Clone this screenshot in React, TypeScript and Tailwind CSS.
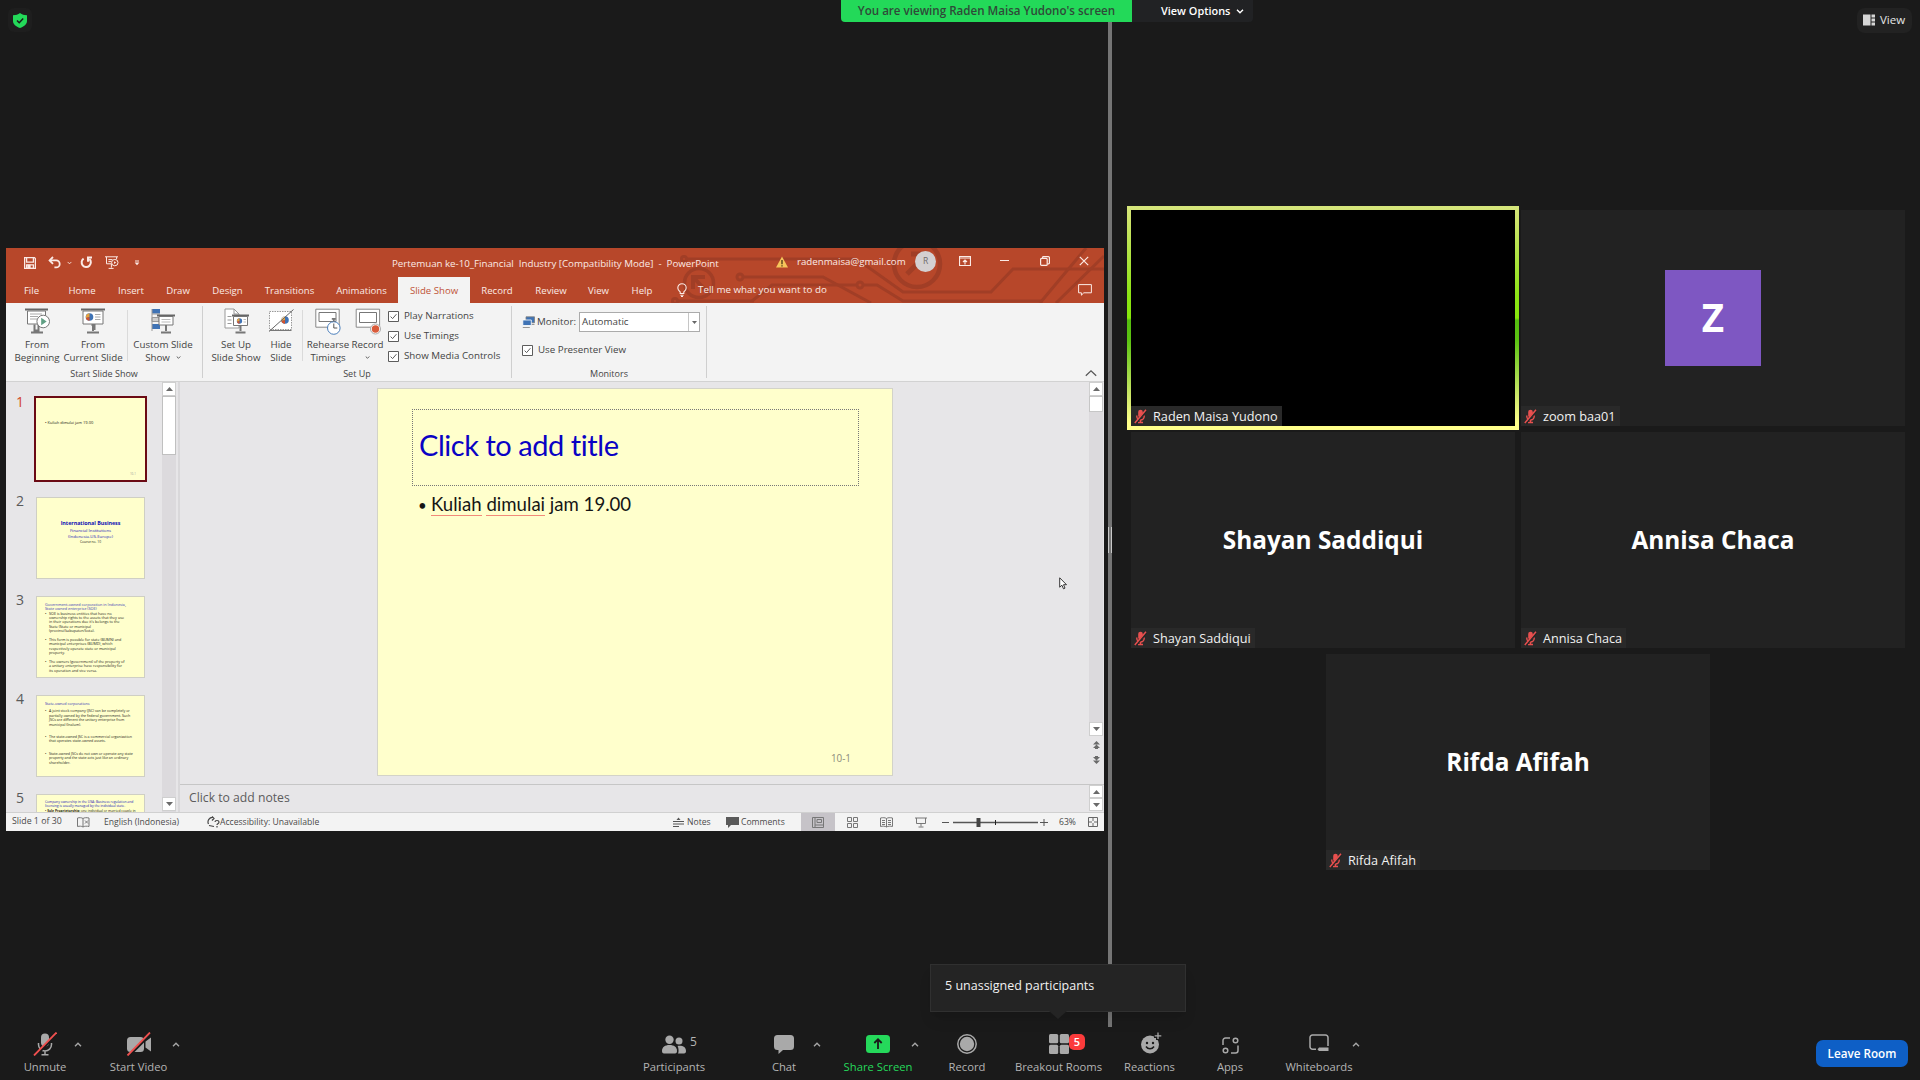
import React from 'react';
import { clsx } from 'clsx';

const Caret: React.FC<{ className?: string; up?: boolean }> = ({ className, up }) => (
  <svg viewBox="0 0 8 5" className={clsx('h-[5px] w-2 shrink-0', className)} fill="none" stroke="currentColor" strokeWidth="1.4">
    <path d={up ? 'M1 4.2 4 1.2 7 4.2' : 'M1 .8 4 3.8 7 .8'} />
  </svg>
);

const Triangle: React.FC<{ up?: boolean }> = ({ up }) => (
  <svg viewBox="0 0 7 4" className="h-1 w-[7px]" fill="#6a6a6a">
    <path d={up ? 'M0 4 3.5 0 7 4Z' : 'M0 0 3.5 4 7 0Z'} />
  </svg>
);

/* ---------- PowerPoint window ---------- */

const TitleBar: React.FC = () => (
  <div className="relative z-10 flex h-[29px] items-center text-[#fbeae5]">
    <svg viewBox="0 0 12 12" className="ml-[18px] size-3" fill="none" stroke="currentColor" strokeWidth="1.3">
      <path d="M.6.6h9.8l1 1v9.8H.6z M2.6.8v4.4h6.8V.8" />
      <path d="M2.6 11.4V7.8h6.8v3.6z" />
      <path d="M4 8.4h2v3H4z" fill="currentColor" />
    </svg>
    <svg viewBox="0 0 13 13" className="ml-3 size-[13px]" fill="none" stroke="currentColor" strokeWidth="1.8">
      <path d="M5 1 1.6 4.4 5 7.8" />
      <path d="M1.8 4.4h6.4a3.3 3.3 0 0 1 0 7H6.4" />
    </svg>
    <Caret className="ml-[6px] !h-[4px] !w-[5px]" />
    <svg viewBox="0 0 13 13" className="ml-[8px] size-[13px]" fill="none" stroke="currentColor" strokeWidth="2">
      <path d="M3.6 2.6A4.6 4.6 0 1 0 9.4 3" />
      <path d="M12 1.6H8v4.2" />
    </svg>
    <svg viewBox="0 0 14 13" className="ml-[12px] h-[13px] w-3.5" fill="none" stroke="currentColor" strokeWidth="1">
      <path d="M0 .8h13M1.5 1v6.8h5M11.6 1v2M3.4 3.6h4M3.4 5.6h3M6.4 8v3.6M3.6 12.4h5" />
      <circle cx="9.8" cy="6.6" r="3.2" />
      <path d="m9 5.2 2.2 1.4L9 8z" fill="currentColor" stroke="none" />
    </svg>
    <svg viewBox="0 0 6 6" className="ml-[15px] size-[6px]" fill="currentColor">
      <path d="M1 .4h4v1H1zM.6 2.6h4.8L3 5.2z" />
    </svg>
    <div className="ml-[252px] w-[389px] whitespace-pre pt-[3px] text-[9.75px] tracking-[-0.02px]">
      Pertemuan ke-10_Financial  Industry [Compatibility Mode]  -  PowerPoint
    </div>
    <svg viewBox="0 0 12 12" className="-ml-[5px] -mt-0.5 size-3">
      <path d="M6 .4 12 11.6H0z" fill="#f6c65b" />
      <path d="M6 4v4.2M6 9.2v1.4" stroke="#3a2a10" strokeWidth="1.2" />
    </svg>
    <div className="ml-[9px] w-[108px] text-[9.7px]">radenmaisa@gmail.com</div>
    <div className="-mt-[3px] ml-[10px] flex size-[21px] items-center justify-center rounded-full bg-[#d4d0d1] text-[8.5px] text-[#6d6b6b]">
      R
    </div>
    <svg viewBox="0 0 12 10" className="-mt-1 ml-[23px] h-2.5 w-3" fill="none" stroke="currentColor" strokeWidth="1.2">
      <path d="M.5.5h11v9H.5zM.5 2h11" />
      <path d="M6 8.4V4.4M4 6l2-2 2 2" />
    </svg>
    <div className="-mt-1 ml-[29px] h-px w-[9px] bg-current" />
    <svg viewBox="0 0 10 10" className="-mt-1 ml-[31px] size-2.5" fill="none" stroke="currentColor" strokeWidth="1.2">
      <rect x=".6" y="2.4" width="6.6" height="7" rx="1" />
      <path d="M2.6 2.2V1.4a.8.8 0 0 1 .8-.8h5a1 1 0 0 1 1 1V7a.8.8 0 0 1-.8.8h-1" />
    </svg>
    <svg viewBox="0 0 10 10" className="-mt-1 ml-[29px] size-2.5" fill="none" stroke="currentColor" strokeWidth="1.2">
      <path d="m.8.8 8.4 8.4M9.2.8.8 9.2" />
    </svg>
  </div>
);

const Circuit: React.FC = () => (
  <svg viewBox="0 0 434 55" className="absolute right-0 top-0 h-[55px] w-[434px]" fill="none" stroke="#a13e26" strokeWidth="3">
    <circle cx="29" cy="35" r="14.5" strokeWidth="3.5" />
    <path d="m37 44-13-14M23 41V29h12" strokeWidth="4" />
    <circle cx="247" cy="16" r="23" strokeWidth="4.5" />
    <path d="m237 26 18-18M241 6h15v15" strokeWidth="5" />
    <circle cx="14" cy="11" r="2.5" />
    <path d="M17 11h166l15 8 35 25h88l22-23h91" />
    <circle cx="70" cy="29" r="3" />
    <path d="M73 29h80l48 26" />
    <circle cx="190" cy="37" r="3" />
    <path d="M187 37h-85L82 53M193 37h14l26 16h140" />
    <circle cx="5" cy="53" r="2.5" />
    <path d="M8 53h76M370 55l46-55M386 55l48-47" />
  </svg>
);

const tabs = [
  { label: 'File', w: 'w-[51px]' },
  { label: 'Home', w: 'w-[50px]' },
  { label: 'Insert', w: 'w-[48px]' },
  { label: 'Draw', w: 'w-[46px]' },
  { label: 'Design', w: 'w-[53px]' },
  { label: 'Transitions', w: 'w-[71px]' },
  { label: 'Animations', w: 'w-[73px]' },
  { label: 'Slide Show', w: 'w-[72px]' },
  { label: 'Record', w: 'w-[54px]' },
  { label: 'Review', w: 'w-[54px]' },
  { label: 'View', w: 'w-[41px]' },
  { label: 'Help', w: 'w-[46px]' },
];

const MenuTabs: React.FC = () => (
  <div className="relative z-10 flex h-[26px] items-stretch text-[9.6px] text-[#fbeae5]">
    {tabs.map((tab) => (
      <div
        key={tab.label}
        className={clsx(
          'flex items-center justify-center pt-[2px]',
          tab.w,
          tab.label === 'Slide Show' && 'bg-[#f3f3f3] text-[#bf5338]',
        )}
      >
        {tab.label}
      </div>
    ))}
    <div className="ml-[12px] flex items-center gap-[11px]">
      <svg viewBox="0 0 10 14" className="h-3.5 w-2.5" fill="none" stroke="currentColor" strokeWidth="1.1">
        <path d="M3.2 10.5V9C2 8 .8 6.8.8 4.9a4.2 4.2 0 0 1 8.4 0C9.2 6.8 8 8 6.8 9v1.5zM3.4 12.2h3.2M4 13.5h2" />
      </svg>
      <span className="text-[9.8px]">Tell me what you want to do</span>
    </div>
    <svg viewBox="0 0 14 12" className="ml-auto mr-[12px] mt-[7px] h-3 w-3.5" fill="none" stroke="currentColor" strokeWidth="1">
      <path d="M.6.6h12.8v8.2H5.8L3.4 11.2V8.8H.6z" />
    </svg>
  </div>
);

const CheckBox: React.FC<{ label: string }> = ({ label }) => (
  <div className="flex h-5 items-center gap-[5px]">
    <svg viewBox="0 0 11 11" className="size-[11px]" fill="#fff" stroke="#5c5c5c" strokeWidth="1">
      <path d="M.5.5h10v10H.5z" />
      <path d="m2.6 5.6 2 2 3.8-4.4" fill="none" />
    </svg>
    <span>{label}</span>
  </div>
);

const RibbonButton: React.FC<{ className: string; lines: [string, string]; caret?: boolean; children: React.ReactNode }> = ({
  className,
  lines,
  caret,
  children,
}) => (
  <div className={clsx('flex shrink-0 flex-col items-center whitespace-nowrap leading-[13.5px]', className)}>
    <svg viewBox="0 0 26 27" className="h-[27px] w-[26px]" fill="none" stroke="#777" strokeWidth="1">
      {children}
    </svg>
    <span className="mt-[2.5px]">{lines[0]}</span>
    <span className="flex h-[13px] items-center gap-1.5">
      {lines[1]}
      {caret && <Caret className="!h-[3px] !w-[5px]" />}
    </span>
  </div>
);

const Pie: React.FC<{ cx: number; cy: number }> = ({ cx, cy }) => (
  <g stroke="none" transform={`translate(${cx} ${cy})`}>
    <circle r="3.8" fill="#3f73b5" />
    <path d="M0 0v-3.8A3.8 3.8 0 0 0-3.6 1z" fill="#e9a23b" />
    <path d="M0 0-3.6 1A3.8 3.8 0 0 0 0 3.8z" fill="#d4532d" />
  </g>
);

const Ribbon: React.FC = () => (
  <div className="flex h-[79px] border-b border-[#d2d2d2] bg-[#f3f3f3] text-[9.75px] text-[#444]">
    <div className="flex w-[196px] flex-col">
      <div className="flex h-[65px] pt-[5px]">
        <RibbonButton className="w-[62px]" lines={['From', 'Beginning']}>
          <path d="M1 1.5h23" stroke="#666" strokeWidth="2" />
          <path d="M3.5 3h18v13h-18z" fill="#fff" />
          <path d="M6 6h12M6 8.5h8M6 11h7" stroke="#aaa" />
          <path d="M10.5 16.5v6h4v-6M7 24.5h12" strokeWidth="2" />
          <circle cx="19.2" cy="13.5" r="6.3" fill="#fff" />
          <path d="m17.2 9.8 5.5 3.7-5.5 3.7z" fill="#5f9f83" stroke="none" />
        </RibbonButton>
        <RibbonButton className="w-[50px]" lines={['From', 'Current Slide']}>
          <path d="M1 1.5h24" stroke="#666" strokeWidth="2" />
          <path d="M3 3h20v13H3z" fill="#fff" />
          <Pie cx={9.5} cy={9} />
          <path d="M15 6.5h5.5M15 9h5.5M15 11.5h5.5" stroke="#aaa" />
          <path d="M13 16v7M11.5 17h3v5M7 24.5h12" strokeWidth="2" />
        </RibbonButton>
        <div className="ml-[9px] mt-[2px] h-[51px] w-px bg-[#dadada]" />
        <RibbonButton className="w-[70px]" lines={['Custom Slide', 'Show']} caret>
          <path d="M2 1h8v4.5H2zM2 16h8v5H2z" fill="#3f73b5" stroke="none" />
          <path d="M2 1v22M2 6h8M2 9.5h7v4H2z" stroke="#999" fill="#ccc" />
          <path d="M7 7.5h18" stroke="#666" strokeWidth="2" />
          <path d="M9 8.5h14v8.500H9z" fill="#fff" />
          <path d="M11.5 11.5h9M11.5 14h9" stroke="#bbb" />
          <path d="M16 17v6M11 24.5h10" strokeWidth="2" />
        </RibbonButton>
      </div>
      <div className="text-center text-[9px] leading-[15px]">Start Slide Show</div>
    </div>
    <div className="mt-[3px] h-[72px] w-px bg-[#cfcfcf]" />

    <div className="flex w-[308px] flex-col">
      <div className="flex h-[65px] pt-[5px]">
        <RibbonButton className="ml-[8px] w-[50px]" lines={['Set Up', 'Slide Show']}>
          <path d="M2 1h9l5 5v14H2z" fill="#fff" stroke="#999" />
          <path d="M11 1v5h5M4.5 8.5h4M4.5 12h4M4.5 15.5h4" stroke="#999" />
          <path d="M9 7.5h17" stroke="#666" strokeWidth="2" />
          <path d="M10.5 8.5h14v9h-14z" fill="#fff" />
          <g transform="translate(16.5 13) scale(.7)">
            <Pie cx={0} cy={0} />
          </g>
          <path d="M20.5 11.5h2.5M20.5 14h2.5" stroke="#bbb" />
          <path d="M17.5 18v5M12.5 24.5h10" strokeWidth="2" />
        </RibbonButton>
        <RibbonButton className="ml-[6px] w-[28px]" lines={['Hide', 'Slide']}>
          <path d="M1.5 3.5h22v18h-22z" fill="#fff" stroke="#999" strokeDasharray="1.5 1" />
          <Pie cx={17} cy={12} />
          <path d="M2 21V4h21z" fill="#fff" stroke="none" opacity=".5" />
          <path d="M1 23.5 25.5 1.5" stroke="#666" />
          <path d="M1.5 22.5h22" />
        </RibbonButton>
        <div className="ml-[7px] mt-[2px] h-[51px] w-px bg-[#dadada]" />
        <RibbonButton className="ml-[5px] w-[40px]" lines={['Rehearse', 'Timings']}>
          <path d="M.8 1.2h23.4v18H.8z" fill="#fff" stroke="#888" />
          <path d="M4 4.5h17v9H4z" />
          <circle cx="18.8" cy="20" r="6.3" fill="#fff" stroke="#4a7ebb" />
          <path d="M18.8 10.5v3M16.8 10.8h4" strokeWidth="1.8" />
          <path d="M18.8 15.5V20h3.5" stroke="#555" />
        </RibbonButton>
        <RibbonButton className="w-[39px]" lines={['Record', '']} caret>
          <path d="M1.2 1.2h23.4v18H1.2z" fill="#fff" stroke="#888" />
          <path d="M4.5 4.5h17v10h-17z" />
          <circle cx="20.5" cy="21" r="5" fill="#fff" stroke="#aaa" />
          <circle cx="20.5" cy="21" r="3.7" fill="#d95b3a" stroke="none" />
        </RibbonButton>
        <div className="-mt-[2px] ml-px whitespace-nowrap">
          <CheckBox label="Play Narrations" />
          <CheckBox label="Use Timings" />
          <CheckBox label="Show Media Controls" />
        </div>
      </div>
      <div className="text-center text-[9px] leading-[15px]">Set Up</div>
    </div>
    <div className="mt-[3px] h-[72px] w-px bg-[#cfcfcf]" />

    <div className="flex w-[194px] flex-col">
      <div className="h-[65px] pl-[10px] pt-[9px]">
        <div className="flex h-5 items-center">
          <svg viewBox="0 0 13 13" className="size-[13px]" stroke="#7d7d7d" strokeWidth=".8">
            <path d="M4 .8h8.5v6H4z" fill="#3f73b5" />
            <path d="M5.5 8.5h7M.8 11.5h7" />
            <path d="M.8 4h8.5v5.5H.8z" fill="#3f73b5" stroke="#fff" />
          </svg>
          <span className="ml-[2px] w-[42px]">Monitor:</span>
          <div className="flex h-5 w-[121px] items-center border border-[#ababab] bg-white pl-0.5">
            <span className="flex-1">Automatic</span>
            <div className="flex h-full w-[11px] items-center justify-center border-l border-[#c6c6c6]">
              <svg viewBox="0 0 5 3" className="h-[3px] w-[5px]" fill="#666">
                <path d="M0 0h5L2.5 3z" />
              </svg>
            </div>
          </div>
        </div>
        <div className="mt-[8px]">
          <CheckBox label="Use Presenter View" />
        </div>
      </div>
      <div className="text-center text-[9px] leading-[15px]">Monitors</div>
    </div>
    <div className="mt-[3px] h-[72px] w-px bg-[#cfcfcf]" />
    <svg viewBox="0 0 12 8" className="mb-[4px] ml-auto mr-[7px] h-2 w-3 self-end" fill="none" stroke="#555" strokeWidth="1.2">
      <path d="m.8 6.8 5.2-5 5.2 5" />
    </svg>
  </div>
);

interface Line {
  text: string;
  className?: string;
}

const Thumb: React.FC<{ n: number; children: React.ReactNode }> = ({ n, children }) => (
  <div className="mb-4 flex h-[83px] shrink-0">
    <div className={clsx('-mt-[5px] w-[30px] pl-[10px] text-[14px] leading-[18px]', n === 1 ? 'text-[#d24726]' : 'text-[#5a5a5a]')}>
      {n}
    </div>
    <div
      className={clsx(
        'h-[82px] w-[109px] whitespace-nowrap bg-[#ffffcc] text-[3.6px] leading-[4.4px] text-[#222216]',
        n === 1 ? 'outline-2 outline-[#6b0a14]' : 'border border-[#cfcfc4]',
      )}
    >
      {children}
    </div>
  </div>
);

const Bullet: React.FC<{ lines: string[]; className?: string }> = ({ lines, className }) => (
  <div className={clsx('flex', className)}>
    <span className="w-1">•</span>
    <div>
      {lines.map((line) => (
        <div key={line}>{line}</div>
      ))}
    </div>
  </div>
);

const subtitle: Line[] = [
  { text: 'International Business', className: 'text-[5.4px] font-bold leading-[7px] tracking-[-0.05px] text-[#1010b4]' },
  { text: 'Financial Institutions', className: 'text-[4.3px] leading-[6px] text-[#2020b8]' },
  { text: '(Indonesia-US-Europe)', className: 'text-[4.3px] leading-[6px] text-[#2020b8]' },
  { text: 'Course no. 10', className: 'text-[3.3px] leading-[6px]' },
];

const ScrollButton: React.FC<{ up?: boolean; className?: string }> = ({ up, className }) => (
  <div className={clsx('flex h-[14px] w-full shrink-0 items-center justify-center border border-[#cfcfcf] bg-white', className)}>
    <Triangle up={up} />
  </div>
);

const SlidePanel: React.FC = () => (
  <div className="flex w-[174px] shrink-0 border-r-2 border-[#d9d8da]">
    <div className="flex w-[156px] shrink-0 flex-col overflow-hidden pt-[16px]">
      <Thumb n={1}>
        <div className="flex h-full flex-col justify-between px-[9px] pb-1 pt-[23px]">
          <span className="text-[4px]">• Kuliah dimulai jam 19.00</span>
          <span className="self-end text-[3px] text-[#999]">10-1</span>
        </div>
      </Thumb>
      <Thumb n={2}>
        <div className="pt-[22px] text-center">
          {subtitle.map((line) => (
            <div key={line.text} className={line.className}>
              {line.text}
            </div>
          ))}
        </div>
      </Thumb>
      <Thumb n={3}>
        <div className="pl-2 pt-[6px] text-[3.7px]">
          <div className="mb-px text-[3.8px] leading-[3.8px] text-[#3a3ab5]">
            Government-owned corporation in Indonesia,
            <br />
            State owned enterprise (SOE)
          </div>
          <Bullet
            lines={[
              'SOE is business entities that have no',
              'ownership rights to the assets that they use',
              "in their operations due it's belongs to the",
              'State (State or municipal',
              '(provinsi/kabupaten/kota).',
            ]}
          />
          <Bullet
            className="mt-[4.4px]"
            lines={[
              'This form is possible for state (BUMN) and',
              'municipal enterprises (BUMD), which',
              'respectively operate state or municipal',
              'property.',
            ]}
          />
          <Bullet
            className="mt-[4.4px]"
            lines={[
              'The owners (government) of the property of',
              'a unitary enterprise have responsibility for',
              'its operation and vice versa.',
            ]}
          />
        </div>
      </Thumb>
      <Thumb n={4}>
        <div className="pl-2 pt-[6px]">
          <div className="mb-[3px] text-[3.7px] text-[#3030b5]">State-owned corporations</div>
          <Bullet
            lines={[
              'A joint stock company (JSC) can be completely or',
              'partially owned by the federal government. Such',
              'JSCs are different the unitary enterprise from',
              'municipal (Inalum).',
            ]}
          />
          <Bullet className="mt-[8px]" lines={['The state-owned JSC is a commercial organization', 'that operates state-owned assets.']} />
          <Bullet
            className="mt-[8px]"
            lines={['State-owned JSCs do not own or operate any state', 'property and the state acts just like an ordinary', 'shareholder.']}
          />
        </div>
      </Thumb>
      <Thumb n={5}>
        <div className="pl-2 pt-[5px] text-[3.35px]">
          <div className="text-[#2020b8]">
            Company ownership in the USA: Business regulation and
            <br />
            licensing is usually managed by the individual state.
          </div>
          <div>
            • <b>Sole Proprietorship</b>: one individual or married couple in
          </div>
        </div>
      </Thumb>
    </div>
    <div className="flex w-[14px] flex-col bg-[#dcdadd] pb-px">
      <ScrollButton up />
      <div className="h-[59px] border border-[#c0c0c0] bg-white" />
      <ScrollButton className="mt-auto" />
    </div>
  </div>
);

const DoubleArrow: React.FC<{ className?: string }> = ({ className }) => (
  <svg viewBox="0 0 7 8" className={clsx('h-2 w-[7px]', className)} fill="#6a6a6a">
    <path d="M0 3.5 3.5 0 7 3.5zM0 7 3.5 3.5 7 7zM2 7h3v1H2z" />
  </svg>
);

const Editor: React.FC = () => (
  <div className="flex min-w-0 flex-1 flex-col">
    <div className="flex h-[402px]">
      <div className="flex flex-1 pl-[197px] pt-[6px]">
        <div className="flex h-[388px] w-[516px] flex-col border border-[#d3d3c8] bg-[#ffffcc] pl-[34px] pt-[20px] font-['Lato',sans-serif]">
          <div className="flex h-[77px] w-[447px] items-center border border-dotted border-[#777] pb-[6px] pl-[6px] text-[29px] tracking-[-0.45px] text-[#0a02c4]">
            Click to add title
          </div>
          <div className="mt-[5px] flex h-7 items-center pl-[6px] text-[18.6px] text-[#151515]">
            <span className="w-[13px] text-[15px]">•</span>
            <span className="whitespace-pre">
              <span className="border-b border-[#f28a7a] leading-[18px]">Kuliah</span>{' '}
              <span className="border-b border-[#f28a7a] leading-[18px]">dimulai</span> jam 19.00
            </span>
          </div>
          <div className="mb-[9px] mr-[41px] mt-auto self-end font-['Open_Sans',sans-serif] text-[9.9px] text-[#8c8c7c]">10-1</div>
        </div>
      </div>
      <div className="mr-px flex w-[14px] flex-col items-center bg-[#e7e6e8]">
        <ScrollButton up />
        <div className="flex w-full flex-1 flex-col bg-[#dcdadd]">
          <div className="h-[16px] border border-[#c6c6c6] bg-white" />
        </div>
        <ScrollButton />
        <DoubleArrow className="mt-[5px]" />
        <DoubleArrow className="mb-[20px] mt-[7px] rotate-180" />
      </div>
    </div>
    <div className="flex flex-1 border-t border-[#c6c6c6]">
      <div className="flex-1 pl-[9px] pt-[4px] text-[12.2px] text-[#5c5c5c]">Click to add notes</div>
      <div className="mr-px flex w-[14px] flex-col justify-end pb-px">
        <ScrollButton up className="!h-[13px]" />
        <ScrollButton className="!h-[13px]" />
      </div>
    </div>
  </div>
);

const StatusBar: React.FC = () => (
  <div className="flex h-[19px] items-center whitespace-nowrap border-t border-[#d0d0d0] bg-[#f3f3f3] text-[8.6px] text-[#4a4a4a]">
    <span className="ml-[6px] w-[65px] text-[8.8px]">Slide 1 of 30</span>
    <svg viewBox="0 0 13 11" className="h-[11px] w-[13px]" fill="none" stroke="#777" strokeWidth="1">
      <path d="M6 1.5C4.5.5 2.5.5.5 1v8.5c2-.5 4-.5 5.5.5zM6 1.5C7.5.5 9.5.5 12 1v8.5c-2-.5-4.5-.5-6 .5M8 3.5l3 3M11 3.5l-3 3" />
    </svg>
    <span className="ml-[14px] w-[103px]">English (Indonesia)</span>
    <svg viewBox="0 0 13 12" className="h-3 w-[13px]" fill="none" stroke="#444" strokeWidth="1.2">
      <path d="M6 1.5A4.5 4.5 0 0 0 1.5 8M2 9.5l5 1M5 .5l2 2-2 2M8 6c0-2 4-2 4 0s-2 1.5-2 3M10 10v1.5" />
    </svg>
    <span>Accessibility: Unavailable</span>

    <svg viewBox="0 0 11 10" className="ml-auto h-2.5 w-[11px]" stroke="#555" strokeWidth="1">
      <path d="M0 4.5h11M0 7h11M0 9.5h6" />
      <path d="m3.5 3 2-2.5 2 2.5z" fill="#555" stroke="none" />
    </svg>
    <span className="ml-[3px] w-[39px]">Notes</span>
    <svg viewBox="0 0 13 11" className="h-[11px] w-[13px]" fill="#5a5a5a">
      <path d="M0 0h13v8H5l-3 3V8H0z" />
    </svg>
    <span className="ml-[2px] w-[60px]">Comments</span>
    <div className="flex h-full w-[34px] items-center justify-center bg-[#c6c3c8]">
      <svg viewBox="0 0 12 11" className="h-[11px] w-3" fill="none" stroke="#777" strokeWidth="1">
        <path d="M.5.5h11v10H.5zM3 .5v10M3 8h8.5M5 2.5h4.5v3H5z" />
      </svg>
    </div>
    <div className="flex w-[103px] items-center justify-between pl-[12px] pr-[11px] text-[#777]">
      <svg viewBox="0 0 11 11" className="size-[11px]" fill="none" stroke="currentColor">
        <path d="M.5.5h4v4h-4zM6.5.5h4v4h-4zM.5 6.5h4v4h-4zM6.5 6.5h4v4h-4z" />
      </svg>
      <svg viewBox="0 0 13 11" className="h-[11px] w-[13px]" fill="none" stroke="currentColor">
        <path d="M6.5 1.5C5 .5 3 .5.5 1v8.5c2-.5 4.5-.5 6 .5 1.5-1 4-1 6-.5V1c-2.5-.5-4.5-.5-6 .5zv8.5M2 3.5h3M2 5.5h3M2 7.5h3M8 3.5h3M8 5.5h3M8 7.5h3" />
      </svg>
      <svg viewBox="0 0 12 11" className="h-[11px] w-3" fill="none" stroke="currentColor">
        <path d="M0 1h12M1.5 1v5.5h9V1M6 6.5v3M3.5 10h5" />
      </svg>
    </div>
    <svg viewBox="0 0 106 11" className="ml-[4px] h-[11px] w-[106px]" stroke="#555" strokeWidth="1">
      <path d="M0 5.5h7M98 5.5h8M102 2v7" />
      <path d="M11 5.5h85" strokeWidth="1.5" />
      <path d="M53.5 3v5" stroke="#222" />
      <path d="M34.5 1h4v9h-4z" fill="#444" stroke="none" />
    </svg>
    <span className="ml-[11px] w-[29px]">63%</span>
    <svg viewBox="0 0 10 10" className="mr-[6px] size-2.5" fill="none" stroke="#666" strokeWidth="1">
      <path d="M.5.5h9v9h-9zM5 .5V4M5 6v3.5M.5 5H4M6 5h3.5" />
    </svg>
  </div>
);

const PowerPoint: React.FC = () => (
  <div className="relative flex h-[583px] w-[1098px] flex-col bg-[#e7e6e8]">
    <div className="relative h-[55px] shrink-0 bg-[#b7472a]">
      <Circuit />
      <TitleBar />
      <MenuTabs />
    </div>
    <Ribbon />
    <div className="flex h-[430px] min-h-0">
      <SlidePanel />
      <Editor />
    </div>
    <StatusBar />
    <svg viewBox="0 0 9 14" className="absolute left-[1053px] top-[329px] h-3.5 w-[9px]" fill="#fff" stroke="#222" strokeWidth=".9">
      <path d="M.7.8v9.4l2.2-2 1.6 3.6 1.5-.7-1.5-3.4h3z" />
    </svg>
  </div>
);

/* ---------- Gallery ---------- */

const MutedMic: React.FC = () => (
  <svg viewBox="0 0 13 15" className="h-[15px] w-[13px]" fill="none" stroke="#e8504f" strokeWidth="1.4">
    <rect x="4.2" y=".8" width="4.6" height="8" rx="2.3" fill="#e8504f" stroke="none" />
    <path d="M2.8 6.5v.8a3.7 3.7 0 0 0 7.4 0v-.8M6.5 11v2.5M4 13.5h5" />
    <path d="M1.8 14.2 12.8 1" stroke="#242424" strokeWidth="2.2" />
    <path d="M.8 14 12 .8" strokeWidth="1.5" />
  </svg>
);

const Tile: React.FC<{ name: string; speaking?: boolean; children?: React.ReactNode }> = ({ name, speaking, children }) => (
  <div className={clsx('relative flex h-[216px] w-[384px] items-center justify-center', speaking ? 'bg-black' : 'bg-[#222222]')}>
    {speaking && (
      <div className="absolute -inset-1 -z-10 bg-[linear-gradient(to_bottom,#d6e67c_0%,#cfe46c_6%,#8ce414_40%,#86e60c_50%,#55bd0f_51%,#5cc312_60%,#cfe86a_85%,#ffff8a_97%)]" />
    )}
    {children}
    <div className="absolute bottom-0 left-0 flex h-5 items-center gap-[6px] bg-[#292929] px-[3px] text-[12.7px] text-[#f2f2f2]">
      <MutedMic />
      <span className="pr-px pt-px">{name}</span>
    </div>
  </div>
);

const BigName: React.FC<{ children: string }> = ({ children }) => (
  <span className="pt-px text-[24.4px] font-bold text-white">{children}</span>
);

const Gallery: React.FC = () => (
  <div className="relative z-0 flex flex-1 flex-col gap-1.5 pl-[19px] pt-[210px]">
    <div className="flex gap-1.5">
      <Tile name="Raden Maisa Yudono" speaking />
      <Tile name="zoom baa01">
        <div className="flex size-24 items-center justify-center bg-[#7e57c2] text-[38.5px] font-bold text-white">Z</div>
      </Tile>
    </div>
    <div className="flex gap-1.5">
      {['Shayan Saddiqui', 'Annisa Chaca'].map((name) => (
        <Tile key={name} name={name}>
          <BigName>{name}</BigName>
        </Tile>
      ))}
    </div>
    <div className="flex w-[774px] justify-center">
      <Tile name="Rifda Afifah">
        <BigName>Rifda Afifah</BigName>
      </Tile>
    </div>
  </div>
);

/* ---------- Toolbar ---------- */

const Tool: React.FC<{ label: string; className: string; caret?: boolean; green?: boolean; children: React.ReactNode }> = ({
  label,
  className,
  caret,
  green,
  children,
}) => (
  <div className="flex">
    <div className={clsx('relative flex flex-col items-center whitespace-nowrap', className)}>
      <div className="flex h-[26px] items-center justify-center">{children}</div>
      <span className={clsx('mt-px text-[11.25px] leading-[18px]', green ? 'text-[#25d95b]' : 'text-[#b4b4b4]')}>{label}</span>
    </div>
    {caret && (
      <div className="flex h-[26px] w-3 items-center justify-center text-[#a8a8a8]">
        <Caret up />
      </div>
    )}
  </div>
);

const Toolbar: React.FC = () => (
  <div className="flex h-[53px] items-start pt-[4px]">
    <Tool label="Unmute" className="ml-[18px] w-[54px] shrink-0" caret>
      <svg viewBox="0 0 24 24" className="size-6" fill="none" stroke="#a9a9a9" strokeWidth="1.5">
        <rect x="8" y="1.5" width="8" height="13" rx="4" fill="#a9a9a9" stroke="none" />
        <path d="M5.5 11v1.5a6.5 6.5 0 0 0 13 0V11M12 19v3.5M8.5 22.8h7" />
        <path d="M2.5 23.5 24.5 1.5" stroke="#1a1a1a" strokeWidth="3" />
        <path d="M1 23.5 23.5.5" stroke="#f0504f" strokeWidth="1.8" />
      </svg>
    </Tool>
    <Tool label="Start Video" className="ml-[23px] w-[63px] shrink-0" caret>
      <svg viewBox="0 0 26 24" className="h-6 w-[26px]" fill="#a9a9a9">
        <rect x="1" y="5" width="17" height="15" rx="3.5" />
        <path d="m19.5 9.5 5.5-4v14l-5.5-4z" />
        <path d="M3 23.5 25 1.5" stroke="#1a1a1a" strokeWidth="3" />
        <path d="M1.5 23.5 24 .5" stroke="#f0504f" strokeWidth="1.8" />
      </svg>
    </Tool>

    <Tool label="Participants" className="ml-[456px] w-[72px] shrink-0">
      <svg viewBox="0 0 24 19" className="h-[19px] w-6" fill="#a9a9a9">
        <circle cx="7.5" cy="4.7" r="4.2" />
        <path d="M0 16c0-4 3-6 7.5-6s7.5 2 7.5 6c0 1.5-.5 2.5-2 2.5H2C.5 18.5 0 17.5 0 16z" />
        <circle cx="17" cy="6" r="3.5" />
        <path d="M15.5 11c5-.8 8.5 1.2 8.5 5 0 1.5-.5 2.5-2 2.5h-6c.8-1 .9-5.5-.5-7.5z" />
      </svg>
      <span className="absolute left-[52px] top-[3px] text-[12px] leading-[16px] text-[#b4b4b4]">5</span>
    </Tool>
    <Tool label="Chat" className="ml-[47px] w-[54px] shrink-0" caret>
      <svg viewBox="0 0 20 19" className="h-[19px] w-5" fill="#a9a9a9">
        <path d="M3.5 0h13A3.5 3.5 0 0 1 20 3.5v8a3.5 3.5 0 0 1-3.5 3.5H9l-4.5 4v-4h-1A3.5 3.5 0 0 1 0 11.5v-8A3.5 3.5 0 0 1 3.5 0z" />
      </svg>
    </Tool>
    <Tool label="Share Screen" className="ml-[24px] w-[62px] shrink-0" caret green>
      <svg viewBox="0 0 24 18" className="h-[18px] w-6">
        <rect width="24" height="18" rx="3.5" fill="#25d95b" />
        <path d="M12 14V5M8.3 8 12 4.3 15.7 8" fill="none" stroke="#1a1a1a" strokeWidth="1.8" />
      </svg>
    </Tool>
    <Tool label="Record" className="ml-[22px] w-[48px] shrink-0">
      <svg viewBox="0 0 20 20" className="size-5">
        <circle cx="10" cy="10" r="9.2" fill="none" stroke="#a9a9a9" strokeWidth="1.5" />
        <circle cx="10" cy="10" r="7.2" fill="#a9a9a9" />
      </svg>
    </Tool>
    <Tool label="Breakout Rooms" className="ml-[22.5px] w-[90px] shrink-0">
      <svg viewBox="0 0 20 20" className="size-5" fill="#a9a9a9">
        <rect width="9.2" height="9.2" rx="1.5" />
        <rect x="10.8" width="9.2" height="9.2" rx="1.5" />
        <rect y="10.8" width="9.2" height="9.2" rx="1.5" />
        <rect x="10.8" y="10.8" width="9.2" height="9.2" rx="1.5" />
      </svg>
      <span className="absolute left-[55.5px] top-[3px] flex h-4 w-4 items-center justify-center rounded-[5px] bg-[#fb3b3b] text-[11px] font-semibold text-white">
        5
      </span>
    </Tool>
    <Tool label="Reactions" className="ml-[18px] w-[56px] shrink-0">
      <svg viewBox="0 0 22 22" className="-mt-0.5 ml-0.5 size-[22px]" fill="none" stroke="#a9a9a9" strokeWidth="1.5">
        <circle cx="10" cy="12.5" r="9" fill="#a9a9a9" stroke="none" />
        <circle cx="7" cy="11" r="1.2" fill="#1a1a1a" stroke="none" />
        <circle cx="13" cy="11" r="1.2" fill="#1a1a1a" stroke="none" />
        <path d="M6 14.5c2 3 6 3 8 0" stroke="#1a1a1a" />
        <path d="M18 0v8M14 4h8" stroke="#1a1a1a" strokeWidth="4" />
        <path d="M18 .5V7M14.700 3.800h6.600" strokeWidth="1.3" />
      </svg>
    </Tool>
    <Tool label="Apps" className="ml-[36.5px] w-[32px] shrink-0">
      <svg viewBox="0 0 17 17" className="mt-0.5 size-[17px]" fill="none" stroke="#a9a9a9" strokeWidth="1.5">
        <path d="M1 8V3.5A2.5 2.5 0 0 1 3.5 1H8M16 8.5v5a2.5 2.5 0 0 1-2.5 2.5H9" />
        <circle cx="13.5" cy="3.5" r="2.3" />
        <circle cx="3.5" cy="13.5" r="2.3" />
      </svg>
    </Tool>
    <Tool label="Whiteboards" className="ml-[42px] w-[62px] shrink-0" caret>
      <svg viewBox="0 0 20 18" className="-mt-0.5 h-[18px] w-5" fill="none" stroke="#a9a9a9" strokeWidth="1.5">
        <path d="M7 15.2H3.5A2.5 2.5 0 0 1 1 12.7V3.5A2.5 2.5 0 0 1 3.5 1h13A2.5 2.5 0 0 1 19 3.5V12" />
        <path d="M8.500 15.5 10 13.5h9.500V17H10z" fill="#a9a9a9" stroke="none" />
      </svg>
    </Tool>

    <button className="ml-auto mr-[12px] mt-[9px] h-[27px] w-[92px] rounded-[7px] bg-[#0e5fc6] text-[11.7px] font-semibold text-white">
      Leave Room
    </button>
  </div>
);

export default function App() {
  return (
    <div className="relative flex h-[1080px] w-[1920px] flex-col overflow-hidden bg-[#1a1a1a] font-['Open_Sans','Noto_Sans',sans-serif]">
      <div className="flex h-[1027px]">
        <div className="w-[1108px] pl-[6px] pt-[248px]">
          <PowerPoint />
        </div>
        <div className="flex w-1 items-center justify-center bg-[#757575] pt-[53px]">
          <div className="h-[26px] w-1 border-x border-[#c8c8c8] bg-[#757575]" />
        </div>
        <Gallery />
      </div>
      <Toolbar />

      {/* sharing banner */}
      <div className="absolute left-[841px] top-0 flex h-[22px] overflow-hidden rounded-b text-[11.6px] font-semibold">
        <div className="flex w-[291px] items-center justify-center bg-[#23d959] text-[#2f4a38]">You are viewing Raden Maisa Yudono's screen</div>
        <div className="flex w-[121px] items-center bg-[#212224] pl-[29px] text-[10.9px] text-white">
          View Options
          <Caret className="ml-[6px]" />
        </div>
      </div>

      <div className="absolute left-[8px] top-[8px] flex size-6 items-center justify-center rounded-md bg-[#1e1e1e]">
        <svg viewBox="0 0 14 15" className="h-[15px] w-3.5">
          <path d="M7 0c2 1.5 4 2.2 7 2.3V8c0 3.5-3 5.5-7 7-4-1.5-7-3.5-7-7V2.3C3 2.2 5 1.5 7 0z" fill="#23d959" />
          <path d="m4 7.5 2.2 2.2 4-4.2" fill="none" stroke="#1a1a1a" strokeWidth="1.5" />
        </svg>
      </div>

      <div className="absolute left-[1857px] top-[8px] flex h-[25px] w-[55px] items-center rounded-lg bg-[#222] pb-px pl-[6px] text-[11.5px] text-[#e6e6e6]">
        <svg viewBox="0 0 12 12" className="size-3" fill="#d6d6d6">
          <path d="M0 .5h7.5v11H0zM8.5.5H12v3H8.5zM8.5 4.5H12v3H8.5zM8.5 8.5H12v3H8.5z" />
        </svg>
        <span className="ml-[5px]">View</span>
      </div>

      {/* breakout rooms hint */}
      <div className="absolute left-[930px] top-[964px] h-[48px] w-[256px] border border-[#303030] bg-[#242424] pl-[14px] pt-[12px] text-[12.5px] text-[#f2f2f2] shadow-lg">
        5 unassigned participants
        <svg viewBox="0 0 18 8" className="absolute left-[118px] top-[46px] h-2 w-[18px]" fill="#242424">
          <path d="M0 0h18L9 8z" />
        </svg>
      </div>
    </div>
  );
}
